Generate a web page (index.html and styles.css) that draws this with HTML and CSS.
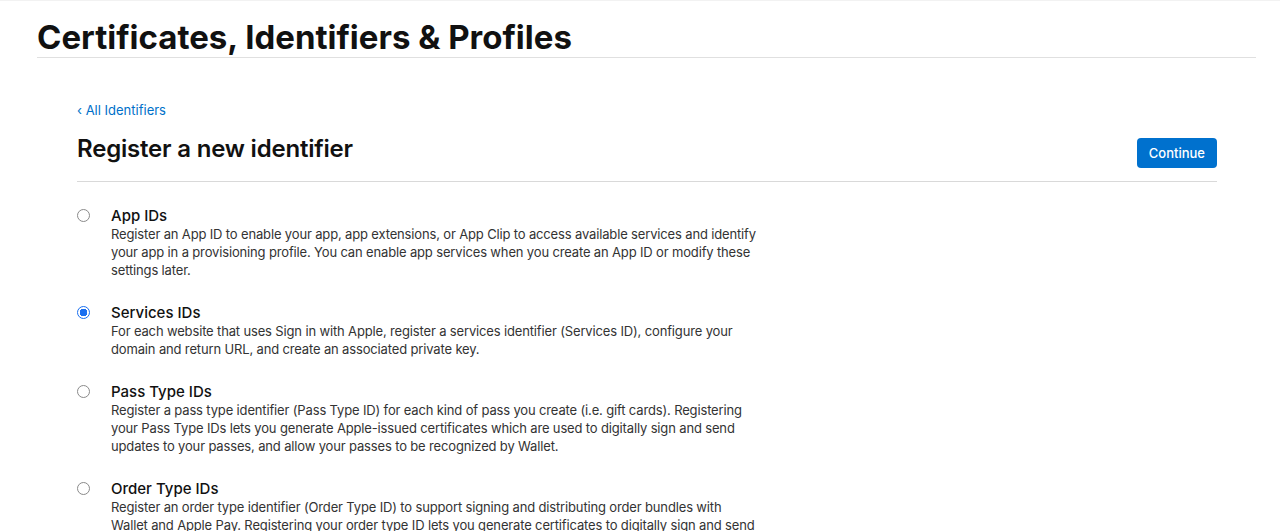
FILE: index.html
```html
<!DOCTYPE html>
<html lang="en">
<head>
<meta charset="utf-8">
<title>Certificates, Identifiers &amp; Profiles</title>
<link rel="stylesheet" href="styles.css">
</head>
<body>
<div class="topline"></div>
<header class="page-header">
  <h1 class="page-title">Certificates, Identifiers &amp; Profiles</h1>
</header>
<main class="content">
  <a class="back-link" href="#">&lsaquo; All Identifiers</a>
  <div class="section-head">
    <h2 class="section-title">Register a new identifier</h2>
    <button class="btn-primary" type="button">Continue</button>
  </div>
  <ul class="options">
    <li class="option">
      <input class="radio" type="radio" name="idtype" id="o1">
      <label class="option-body" for="o1">
        <span class="option-title">App IDs</span>
        <span class="option-desc">Register an App ID to enable your app, app extensions, or App Clip to access available services and identify your app in a provisioning profile. You can enable app services when you create an App ID or modify these settings later.</span>
      </label>
    </li>
    <li class="option">
      <input class="radio" type="radio" name="idtype" id="o2" checked>
      <label class="option-body" for="o2">
        <span class="option-title">Services IDs</span>
        <span class="option-desc">For each website that uses Sign in with Apple, register a services identifier (Services ID), configure your domain and return URL, and create an associated private key.</span>
      </label>
    </li>
    <li class="option">
      <input class="radio" type="radio" name="idtype" id="o3">
      <label class="option-body" for="o3">
        <span class="option-title">Pass Type IDs</span>
        <span class="option-desc">Register a pass type identifier (Pass Type ID) for each kind of pass you create (i.e. gift cards). Registering your Pass Type IDs lets you generate Apple-issued certificates which are used to digitally sign and send updates to your passes, and allow your passes to be recognized by Wallet.</span>
      </label>
    </li>
    <li class="option">
      <input class="radio" type="radio" name="idtype" id="o4">
      <label class="option-body" for="o4">
        <span class="option-title">Order Type IDs</span>
        <span class="option-desc">Register an order type identifier (Order Type ID) to support signing and distributing order bundles with Wallet and Apple Pay. Registering your order type ID lets you generate certificates to digitally sign and send updates to your orders, and allow your orders to be recognized by Wallet.</span>
      </label>
    </li>
  </ul>
</main>
</body>
</html>
```

FILE: styles.css
```css
* { box-sizing: border-box; }
html, body { margin: 0; padding: 0; background: #fff; }
body {
  font-family: Inter, "Noto Sans", "Liberation Sans", sans-serif;
  color: #1d1d1f;
  overflow: hidden;
}
.topline { height: 1px; background: #f2f2f2; }
.page-header {
  margin: 0 24px 0 37px;
  border-bottom: 1px solid #e0e0e0;
  padding-top: 17px;
  height: 57px;
}
.page-title {
  margin: 0;
  font-size: 33px;
  line-height: 38px;
  font-weight: 700;
  letter-spacing: 0;
  color: #111;
}
.content {
  margin: 0 63px 0 77px;
  padding-top: 41px;
}
.back-link {
  display: inline-block;
  font-size: 13px;
  line-height: 18px;
  color: #0070c9;
  text-decoration: none;
}
.section-head {
  display: flex;
  justify-content: space-between;
  align-items: flex-start;
  border-bottom: 1px solid #d9d9d9;
  padding-top: 15px;
  padding-bottom: 13px;
}
.section-title {
  margin: 0;
  font-size: 24px;
  line-height: 30px;
  font-weight: 600;
  color: #111;
  letter-spacing: -0.2px;
}
.btn-primary {
  margin-top: 4px;
  background: #0071ce;
  color: #fff;
  border: 0;
  border-radius: 4px;
  font-family: inherit;
  font-size: 13px;
  line-height: 30px;
  height: 30px;
  padding: 0 12px;
  font-weight: 500;
}
.options {
  list-style: none;
  margin: 0;
  padding: 24px 0 0 0;
}
.option {
  display: flex;
  align-items: flex-start;
  margin-bottom: 24px;
}
.radio {
  appearance: none;
  -webkit-appearance: none;
  width: 13px;
  height: 13px;
  margin: 3px 21px 0 0;
  flex: 0 0 13px;
  border: 1px solid #8a8a8a;
  border-radius: 50%;
  background: #fff;
}
.radio:checked {
  border: 1.5px solid #1a6ff0;
  background: radial-gradient(circle, #1a6ff0 0 3.6px, #fff 4px);
}
.option-body {
  display: flex;
  flex-direction: column;
  max-width: 648px;
}
.option-title {
  font-size: 15px;
  line-height: 19px;
  font-weight: 500;
  color: #111;
}
.option-desc {
  font-size: 13px;
  line-height: 18px;
  letter-spacing: -0.15px;
  color: #333;
}
```
